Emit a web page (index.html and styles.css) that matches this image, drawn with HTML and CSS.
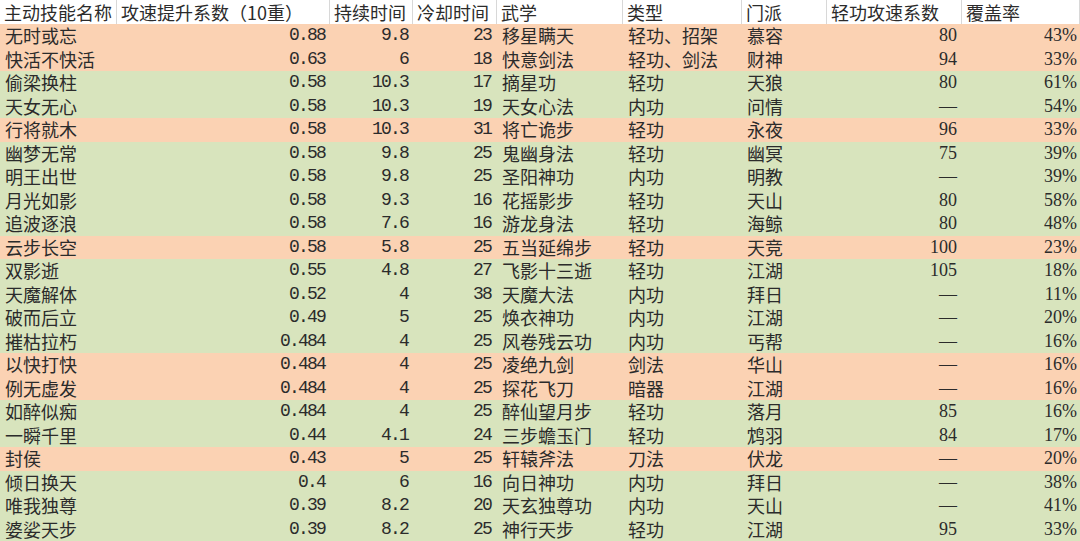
FILE: index.html
```html
<!DOCTYPE html>
<html lang="zh-CN">
<head>
<meta charset="utf-8">
<title>主动技能攻速</title>
<link rel="stylesheet" href="styles.css">
</head>
<body>
<div class="sheet">
  <div class="row head">
    <div class="c c1 t">主动技能名称</div>
    <div class="c c2 t">攻速提升系数（10重）</div>
    <div class="c c3 t">持续时间</div>
    <div class="c c4 t">冷却时间</div>
    <div class="c c5 t">武学</div>
    <div class="c c6 t">类型</div>
    <div class="c c7 t">门派</div>
    <div class="c c8 t">轻功攻速系数</div>
    <div class="c c9 t">覆盖率</div>
  </div>
  <div class="row o"><div class="c c1 t">无时或忘</div><div class="c c2 n">0.88</div><div class="c c3 n">9.8</div><div class="c c4 n">23</div><div class="c c5 t">移星瞒天</div><div class="c c6 t">轻功、招架</div><div class="c c7 t">慕容</div><div class="c c8 r">80</div><div class="c c9 r">43%</div></div>
  <div class="row o"><div class="c c1 t">快活不快活</div><div class="c c2 n">0.63</div><div class="c c3 n">6</div><div class="c c4 n">18</div><div class="c c5 t">快意剑法</div><div class="c c6 t">轻功、剑法</div><div class="c c7 t">财神</div><div class="c c8 r">94</div><div class="c c9 r">33%</div></div>
  <div class="row g"><div class="c c1 t">偷梁换柱</div><div class="c c2 n">0.58</div><div class="c c3 n">10.3</div><div class="c c4 n">17</div><div class="c c5 t">摘星功</div><div class="c c6 t">轻功</div><div class="c c7 t">天狼</div><div class="c c8 r">80</div><div class="c c9 r">61%</div></div>
  <div class="row g"><div class="c c1 t">天女无心</div><div class="c c2 n">0.58</div><div class="c c3 n">10.3</div><div class="c c4 n">19</div><div class="c c5 t">天女心法</div><div class="c c6 t">内功</div><div class="c c7 t">问情</div><div class="c c8 r">—</div><div class="c c9 r">54%</div></div>
  <div class="row o"><div class="c c1 t">行将就木</div><div class="c c2 n">0.58</div><div class="c c3 n">10.3</div><div class="c c4 n">31</div><div class="c c5 t">将亡诡步</div><div class="c c6 t">轻功</div><div class="c c7 t">永夜</div><div class="c c8 r">96</div><div class="c c9 r">33%</div></div>
  <div class="row g"><div class="c c1 t">幽梦无常</div><div class="c c2 n">0.58</div><div class="c c3 n">9.8</div><div class="c c4 n">25</div><div class="c c5 t">鬼幽身法</div><div class="c c6 t">轻功</div><div class="c c7 t">幽冥</div><div class="c c8 r">75</div><div class="c c9 r">39%</div></div>
  <div class="row g"><div class="c c1 t">明王出世</div><div class="c c2 n">0.58</div><div class="c c3 n">9.8</div><div class="c c4 n">25</div><div class="c c5 t">圣阳神功</div><div class="c c6 t">内功</div><div class="c c7 t">明教</div><div class="c c8 r">—</div><div class="c c9 r">39%</div></div>
  <div class="row g"><div class="c c1 t">月光如影</div><div class="c c2 n">0.58</div><div class="c c3 n">9.3</div><div class="c c4 n">16</div><div class="c c5 t">花摇影步</div><div class="c c6 t">轻功</div><div class="c c7 t">天山</div><div class="c c8 r">80</div><div class="c c9 r">58%</div></div>
  <div class="row g"><div class="c c1 t">追波逐浪</div><div class="c c2 n">0.58</div><div class="c c3 n">7.6</div><div class="c c4 n">16</div><div class="c c5 t">游龙身法</div><div class="c c6 t">轻功</div><div class="c c7 t">海鲸</div><div class="c c8 r">80</div><div class="c c9 r">48%</div></div>
  <div class="row o"><div class="c c1 t">云步长空</div><div class="c c2 n">0.58</div><div class="c c3 n">5.8</div><div class="c c4 n">25</div><div class="c c5 t">五当延绵步</div><div class="c c6 t">轻功</div><div class="c c7 t">天竞</div><div class="c c8 r">100</div><div class="c c9 r">23%</div></div>
  <div class="row g"><div class="c c1 t">双影逝</div><div class="c c2 n">0.55</div><div class="c c3 n">4.8</div><div class="c c4 n">27</div><div class="c c5 t">飞影十三逝</div><div class="c c6 t">轻功</div><div class="c c7 t">江湖</div><div class="c c8 r">105</div><div class="c c9 r">18%</div></div>
  <div class="row g"><div class="c c1 t">天魔解体</div><div class="c c2 n">0.52</div><div class="c c3 n">4</div><div class="c c4 n">38</div><div class="c c5 t">天魔大法</div><div class="c c6 t">内功</div><div class="c c7 t">拜日</div><div class="c c8 r">—</div><div class="c c9 r">11%</div></div>
  <div class="row g"><div class="c c1 t">破而后立</div><div class="c c2 n">0.49</div><div class="c c3 n">5</div><div class="c c4 n">25</div><div class="c c5 t">焕衣神功</div><div class="c c6 t">内功</div><div class="c c7 t">江湖</div><div class="c c8 r">—</div><div class="c c9 r">20%</div></div>
  <div class="row g"><div class="c c1 t">摧枯拉朽</div><div class="c c2 n">0.484</div><div class="c c3 n">4</div><div class="c c4 n">25</div><div class="c c5 t">风卷残云功</div><div class="c c6 t">内功</div><div class="c c7 t">丐帮</div><div class="c c8 r">—</div><div class="c c9 r">16%</div></div>
  <div class="row o"><div class="c c1 t">以快打快</div><div class="c c2 n">0.484</div><div class="c c3 n">4</div><div class="c c4 n">25</div><div class="c c5 t">凌绝九剑</div><div class="c c6 t">剑法</div><div class="c c7 t">华山</div><div class="c c8 r">—</div><div class="c c9 r">16%</div></div>
  <div class="row o"><div class="c c1 t">例无虚发</div><div class="c c2 n">0.484</div><div class="c c3 n">4</div><div class="c c4 n">25</div><div class="c c5 t">探花飞刀</div><div class="c c6 t">暗器</div><div class="c c7 t">江湖</div><div class="c c8 r">—</div><div class="c c9 r">16%</div></div>
  <div class="row g"><div class="c c1 t">如醉似痴</div><div class="c c2 n">0.484</div><div class="c c3 n">4</div><div class="c c4 n">25</div><div class="c c5 t">醉仙望月步</div><div class="c c6 t">轻功</div><div class="c c7 t">落月</div><div class="c c8 r">85</div><div class="c c9 r">16%</div></div>
  <div class="row g"><div class="c c1 t">一瞬千里</div><div class="c c2 n">0.44</div><div class="c c3 n">4.1</div><div class="c c4 n">24</div><div class="c c5 t">三步蟾玉门</div><div class="c c6 t">轻功</div><div class="c c7 t">鸩羽</div><div class="c c8 r">84</div><div class="c c9 r">17%</div></div>
  <div class="row o"><div class="c c1 t">封侯</div><div class="c c2 n">0.43</div><div class="c c3 n">5</div><div class="c c4 n">25</div><div class="c c5 t">轩辕斧法</div><div class="c c6 t">刀法</div><div class="c c7 t">伏龙</div><div class="c c8 r">—</div><div class="c c9 r">20%</div></div>
  <div class="row g"><div class="c c1 t">倾日换天</div><div class="c c2 n">0.4</div><div class="c c3 n">6</div><div class="c c4 n">16</div><div class="c c5 t">向日神功</div><div class="c c6 t">内功</div><div class="c c7 t">拜日</div><div class="c c8 r">—</div><div class="c c9 r">38%</div></div>
  <div class="row g"><div class="c c1 t">唯我独尊</div><div class="c c2 n">0.39</div><div class="c c3 n">8.2</div><div class="c c4 n">20</div><div class="c c5 t">天玄独尊功</div><div class="c c6 t">内功</div><div class="c c7 t">天山</div><div class="c c8 r">—</div><div class="c c9 r">41%</div></div>
  <div class="row g"><div class="c c1 t">婆娑天步</div><div class="c c2 n">0.39</div><div class="c c3 n">8.2</div><div class="c c4 n">25</div><div class="c c5 t">神行天步</div><div class="c c6 t">轻功</div><div class="c c7 t">江湖</div><div class="c c8 r">95</div><div class="c c9 r">33%</div></div>
</div>
</body>
</html>
```

FILE: styles.css
```css
html, body {
  margin: 0;
  padding: 0;
  background: #ffffff;
}

.sheet {
  display: flex;
  flex-direction: column;
  width: 1080px;
  color: #2b2b2b;
}

.row {
  display: grid;
  grid-template-columns: 117px 213px 83px 84px 126px 119px 85px 135px 118px;
  height: 23.5px;
}

.row.head {
  height: 24px;
  background: #ffffff;
}

.row.o { background: #fbd2b3; }
.row.g { background: #d8e4bd; }

.c {
  white-space: nowrap;
  line-height: 23.5px;
}

.head .c {
  border-right: 1px solid #d8d8d8;
  line-height: 24px;
}

.t {
  font-family: "Noto Sans CJK SC", sans-serif;
  font-size: 18px;
  padding-left: 5px;
}

.head .t {
  padding-left: 4px;
}

.n {
  font-family: "Liberation Mono", "Noto Sans CJK SC", monospace;
  font-size: 18px;
  letter-spacing: -1.8px;
  text-align: right;
  padding-right: 5px;
}

.r {
  font-family: "Liberation Serif", "Noto Sans CJK SC", serif;
  font-size: 18px;
  text-align: right;
}

.c8.r { padding-right: 5px; }
.c9.r { padding-right: 3px; }
.c4.n { padding-right: 6px; }
```
